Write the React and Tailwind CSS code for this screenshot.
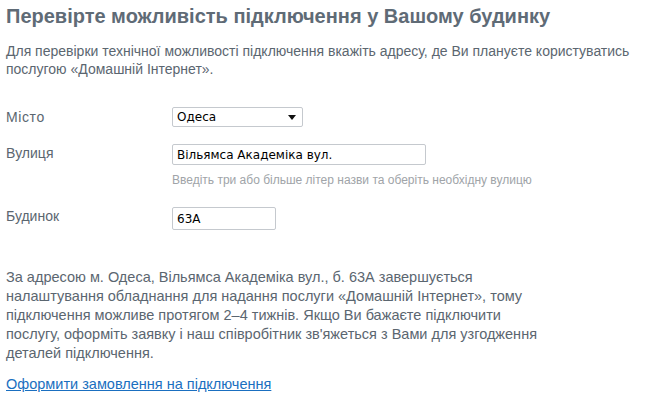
import React from "react";

export default function App() {
  return (
    <div className="w-[666px] h-[396px] bg-white px-[6px] pt-[4px] text-[#5b6670] font-['Liberation_Sans',Arial,sans-serif]">
      <h1 className="text-[20px] leading-[24px] font-bold text-[#5f6b76]">
        Перевірте можливість підключення у Вашому будинку
      </h1>

      <p className="mt-[14px] text-[14px] leading-[18px]">
        Для перевірки технічної можливості підключення вкажіть адресу, де Ви плануєте користуватись
        послугою «Домашній Інтернет».
      </p>

      <div className="mt-[29px] flex flex-col">
        <div className="flex items-start">
          <div className="w-[166px] text-[14px] leading-[18px] pt-[1px] tracking-[0.6px]">Місто</div>
          <div className="w-[131px] h-[20px] border border-[#c5c9ce] rounded-[2px] flex items-center justify-between pl-[4px] pr-[6px] text-[12px] text-black font-['DejaVu_Sans',Verdana,sans-serif]">
            <span>Одеса</span>
            <svg width="8" height="5" viewBox="0 0 8 5">
              <path d="M0 0h8L4 5z" fill="#111" />
            </svg>
          </div>
        </div>

        <div className="flex items-start mt-[17px]">
          <div className="w-[166px] text-[14px] leading-[18px]">Вулиця</div>
          <div className="flex flex-col">
            <div className="w-[254px] h-[21px] border border-[#c5c9ce] rounded-[2px] flex items-center pl-[4px] text-[12px] text-black font-['DejaVu_Sans',Verdana,sans-serif]">
              Вільямса Академіка вул.
            </div>
            <div className="mt-[8px] text-[12px] leading-[14px] text-[#a0a4a8]">
              Введіть три або більше літер назви та оберіть необхідну вулицю
            </div>
          </div>
        </div>

        <div className="flex items-start mt-[20px]">
          <div className="w-[166px] text-[14px] leading-[18px]">Будинок</div>
          <div className="w-[104px] h-[23px] border border-[#c5c9ce] rounded-[2px] flex items-center pl-[4px] text-[12px] text-black font-['DejaVu_Sans',Verdana,sans-serif]">
            63А
          </div>
        </div>
      </div>

      <p className="mt-[38px] text-[14.5px] leading-[19px]">
        За адресою м. Одеса, Вільямса Академіка вул., б. 63А завершується
        <br />
        налаштування обладнання для надання послуги «Домашній Інтернет», тому
        <br />
        підключення можливе протягом 2–4 тижнів. Якщо Ви бажаєте підключити
        <br />
        послугу, оформіть заявку і наш співробітник зв'яжеться з Вами для узгодження
        <br />
        деталей підключення.
      </p>

      <a href="#" className="mt-[12px] inline-block text-[14.5px] leading-[18px] text-[#1a6fc0] underline">
        Оформити замовлення на підключення
      </a>
    </div>
  );
}
